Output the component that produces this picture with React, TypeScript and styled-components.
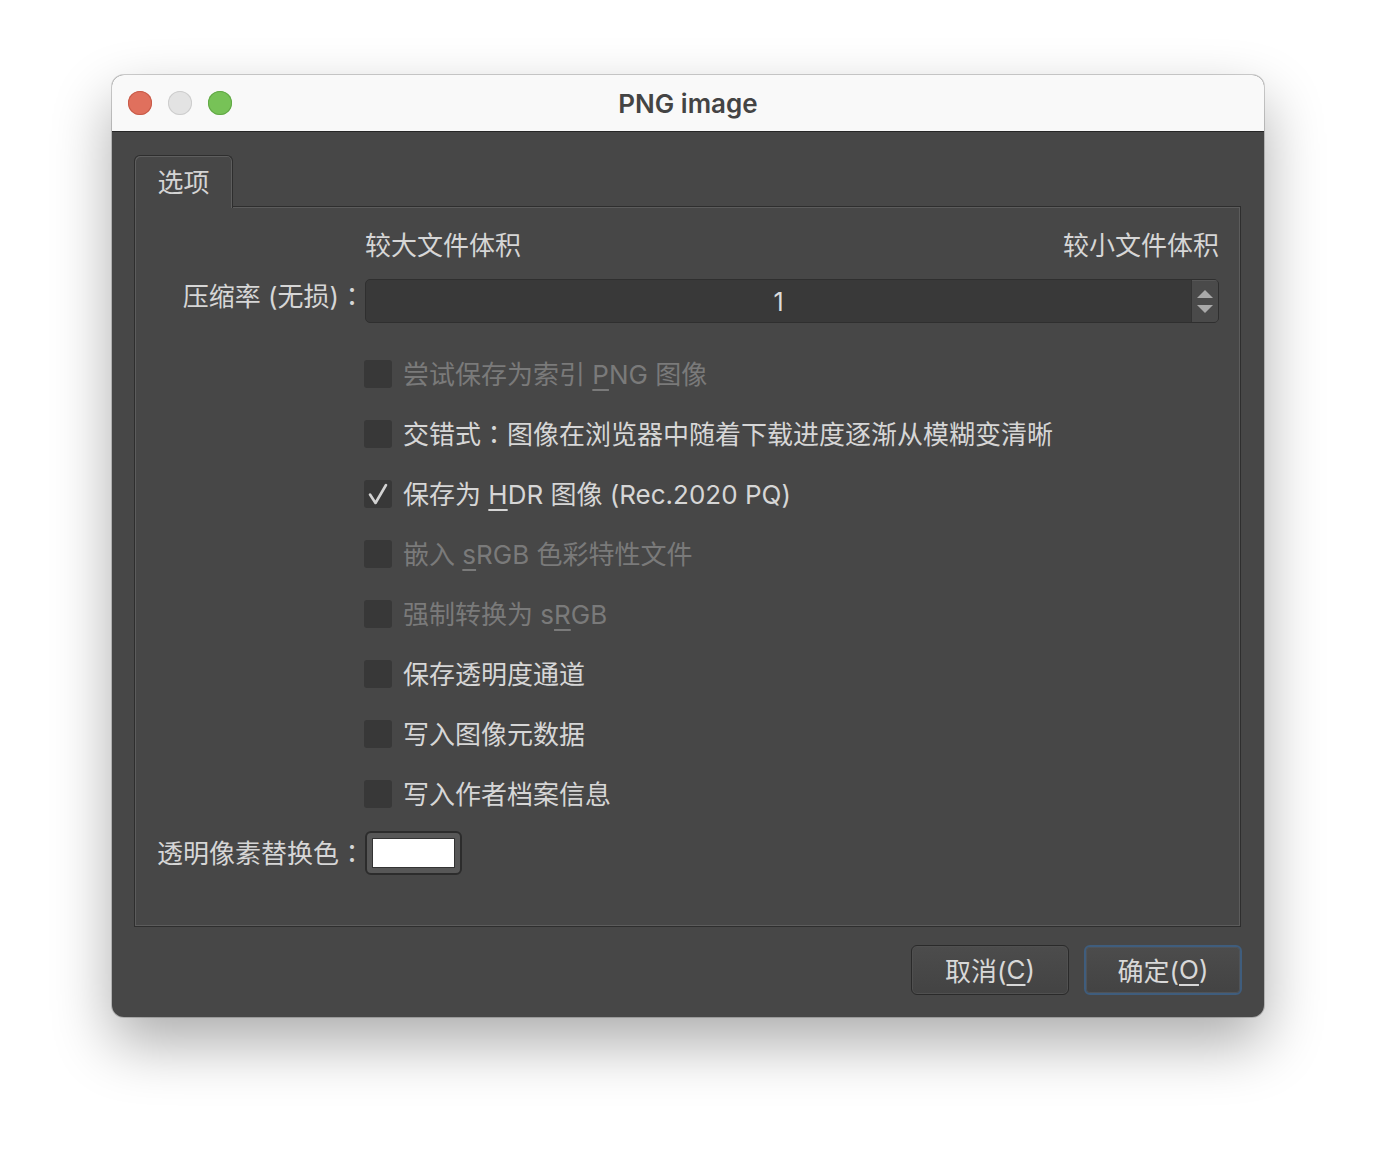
import React from "react";
import styled, { createGlobalStyle } from "styled-components";

const GlobalStyle = createGlobalStyle`
  html, body { margin: 0; padding: 0; background: #ffffff; }
  body { font-family: Inter, "Noto Sans CJK SC", sans-serif; }
  * { box-sizing: border-box; }
`;

const Page = styled.div`
  width: 1376px;
  height: 1166px;
  padding-top: 75px;
  display: flex;
  justify-content: center;
  align-items: flex-start;
`;

const Window = styled.div`
  width: 1152px;
  height: 942px;
  border-radius: 12px;
  overflow: hidden;
  background: #474747;
  box-shadow: 0 26px 60px rgba(0, 0, 0, 0.33), 0 0 0 1px rgba(0, 0, 0, 0.18);
  display: flex;
  flex-direction: column;
`;

const TitleBar = styled.div`
  height: 57px;
  flex: none;
  background: #f9f9f9;
  border-bottom: 1px solid #262626;
  display: grid;
  grid-template-columns: 1fr auto 1fr;
  align-items: center;
  padding: 0 16px;
`;

const Lights = styled.div`
  display: flex;
  gap: 16px;
  align-items: center;
`;

const Light = styled.span<{ $c: string; $b: string }>`
  width: 24px;
  height: 24px;
  border-radius: 50%;
  background: ${(p) => p.$c};
  box-shadow: inset 0 0 0 1px ${(p) => p.$b};
`;

const Title = styled.div`
  font-family: Inter, "Noto Sans CJK SC", sans-serif;
  font-weight: 600;
  font-size: 26px;
  color: #444444;
`;

const Body = styled.div`
  flex: 1;
  display: flex;
  flex-direction: column;
  padding: 23px 23px 22px 22px;
`;

const TabBar = styled.div`
  display: flex;
`;

const Tab = styled.div`
  position: relative;
  z-index: 1;
  width: 99px;
  height: 53px;
  margin-bottom: -2px;
  background: #474747;
  border: 1px solid #2e2e2e;
  border-bottom: none;
  border-radius: 6px 6px 0 0;
  box-shadow: inset 1px 1px 0 #5e5e5e, inset -1px 0 0 #5e5e5e;
  display: flex;
  align-items: center;
  justify-content: center;
  font-size: 26px;
  color: #d4d4d4;
  line-height: 1;
  padding-top: 2px;
`;

const Panel = styled.div`
  border: 1px solid #2e2e2e;
  box-shadow: inset 0 0 0 1px #5c5c5c;
  padding: 21px 21px 51px 22px;
  display: flex;
  flex-direction: column;
`;

const FormRow = styled.div<{ $h: number; $mt?: number }>`
  display: grid;
  grid-template-columns: 208px 1fr;
  column-gap: 0;
  height: ${(p) => p.$h}px;
  margin-top: ${(p) => p.$mt ?? 0}px;
  align-items: center;
`;

const Label = styled.div<{ $top?: boolean }>`
  text-align: right;
  font-size: 26px;
  line-height: 32px;
  color: #d6d6d6;
  white-space: nowrap;
  align-self: ${(p) => (p.$top ? "start" : "center")};
`;

const Colon = styled.span`
  font-family: "Noto Sans CJK TC", sans-serif;
`;

const Ends = styled.div`
  display: flex;
  justify-content: space-between;
  font-size: 26px;
  line-height: 36px;
  color: #d6d6d6;
`;

const Spin = styled.div`
  height: 44px;
  display: flex;
  background: #393939;
  border: 1px solid #2f2f2f;
  border-radius: 5px;
  overflow: hidden;
`;

const SpinValue = styled.div`
  flex: 1;
  display: flex;
  align-items: center;
  justify-content: center;
  font-size: 25px;
  color: #dcdcdc;
  padding-top: 1px;
`;

const SpinButtons = styled.div`
  width: 27px;
  background: #4a4a4a;
  border-left: 1px solid #333333;
  box-shadow: inset 0 1px 0 #575757;
  display: flex;
  flex-direction: column;
  align-items: center;
  justify-content: center;
  gap: 7px;
`;

const CheckList = styled.div`
  display: flex;
  flex-direction: column;
  margin-top: 21px;
  padding-left: 207px;
`;

const CheckRow = styled.div<{ $disabled?: boolean }>`
  height: 60px;
  display: flex;
  align-items: center;
  gap: 11px;
  font-size: 26px;
  color: ${(p) => (p.$disabled ? "#7a7a7a" : "#d6d6d6")};
  white-space: nowrap;
`;

const CheckText = styled.span`
  margin-top: -3px;
`;

const Box = styled.span`
  width: 28px;
  height: 28px;
  border-radius: 3px;
  background: #383838;
  display: flex;
  align-items: center;
  justify-content: center;
  flex: none;
`;

const U = styled.span`
  text-decoration: underline;
  text-decoration-thickness: 2px;
  text-underline-offset: 5px;
`;

const ColorButton = styled.div`
  width: 97px;
  height: 44px;
  border: 2px solid #2c2c2c;
  border-radius: 6px;
  background: #575757;
  padding: 5px;
  display: flex;
`;

const Swatch = styled.div`
  flex: 1;
  background: #ffffff;
  border: 1px solid #333333;
`;

const Buttons = styled.div`
  display: flex;
  justify-content: flex-end;
  gap: 15px;
  margin-top: 18px;
  margin-right: -1px;
`;

const Button = styled.div<{ $default?: boolean }>`
  width: 158px;
  height: 50px;
  border-radius: 6px;
  background: linear-gradient(#4c4c4c, #434343);
  border: ${(p) => (p.$default ? "2px solid #3f5d7d" : "1px solid #2a2a2a")};
  box-shadow: inset 0 0 0 1px ${(p) => (p.$default ? "#4f5358" : "#505050")};
  display: flex;
  align-items: center;
  justify-content: center;
  font-size: 26px;
  color: #d8d8d8;
  padding-bottom: 1px;
`;

const Check = () => (
  <svg width="28" height="28" viewBox="0 0 28 28">
    <path d="M6 14.5 L11.5 23 L22 5" fill="none" stroke="#d2d2d2" strokeWidth="2.6" strokeLinecap="round" strokeLinejoin="round" />
  </svg>
);

const Arrow = ({ up }: { up?: boolean }) => (
  <svg width="16" height="8" viewBox="0 0 16 8">
    <path d={up ? "M0 8 L8 0 L16 8 Z" : "M0 0 L8 8 L16 0 Z"} fill="#a9a9a9" />
  </svg>
);

type Item = { label: React.ReactNode; disabled?: boolean; checked?: boolean };

const items: Item[] = [
  { label: <>尝试保存为索引 <U>P</U>NG 图像</>, disabled: true },
  { label: <>交错式<Colon>：</Colon>图像在浏览器中随着下载进度逐渐从模糊变清晰</> },
  { label: <>保存为 <U>H</U>DR 图像 (Rec.2020 PQ)</>, checked: true },
  { label: <>嵌入 <U>s</U>RGB 色彩特性文件</>, disabled: true },
  { label: <>强制转换为 s<U>R</U>GB</>, disabled: true },
  { label: <>保存透明度通道</> },
  { label: <>写入图像元数据</> },
  { label: <>写入作者档案信息</> },
];

export default function App() {
  return (
    <>
      <GlobalStyle />
      <Page>
        <Window>
          <TitleBar>
            <Lights>
              <Light $c="#e0705d" $b="#c75b49" />
              <Light $c="#e3e3e3" $b="#cdcdcd" />
              <Light $c="#77c257" $b="#62a846" />
            </Lights>
            <Title>PNG image</Title>
            <span />
          </TitleBar>
          <Body>
            <TabBar>
              <Tab>选项</Tab>
            </TabBar>
            <Panel>
              <FormRow $h={36}>
                <span />
                <Ends>
                  <span>较大文件体积</span>
                  <span>较小文件体积</span>
                </Ends>
              </FormRow>
              <FormRow $h={44} $mt={15}>
                <Label $top>压缩率 (无损)<Colon>：</Colon></Label>
                <Spin>
                  <SpinValue>1</SpinValue>
                  <SpinButtons>
                    <Arrow up />
                    <Arrow />
                  </SpinButtons>
                </Spin>
              </FormRow>
              <CheckList>
                {items.map((it, i) => (
                  <CheckRow key={i} $disabled={it.disabled}>
                    <Box>{it.checked ? <Check /> : null}</Box>
                    <CheckText>{it.label}</CheckText>
                  </CheckRow>
                ))}
              </CheckList>
              <FormRow $h={44} $mt={7}>
                <Label>透明像素替换色<Colon>：</Colon></Label>
                <ColorButton>
                  <Swatch />
                </ColorButton>
              </FormRow>
            </Panel>
            <Buttons>
              <Button>取消(<U>C</U>)</Button>
              <Button $default>确定(<U>O</U>)</Button>
            </Buttons>
          </Body>
        </Window>
      </Page>
    </>
  );
}
